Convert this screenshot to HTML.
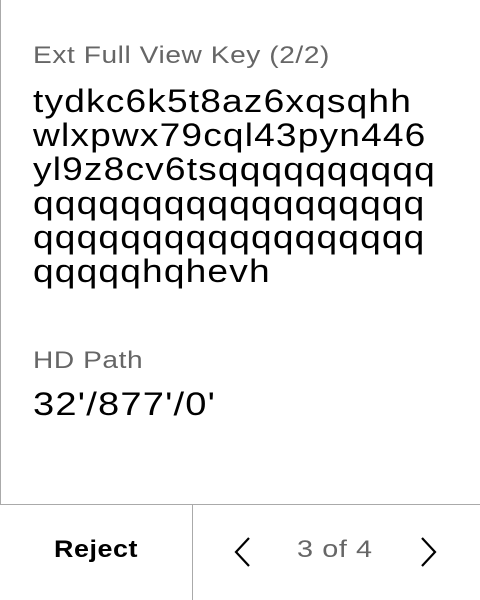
<!DOCTYPE html>
<html><head><style>
body{margin:0;width:480px;height:600px;background:#fff;position:relative;overflow:hidden;font-family:"Liberation Sans",sans-serif}
.lb{position:absolute;left:0;top:0;width:1px;height:504px;background:#aaa}
.hl{position:absolute;left:0;top:504px;width:480px;height:1px;background:#aaa}
.vl{position:absolute;left:192px;top:504px;width:1px;height:96px;background:#aaa}
.s{transform-origin:0 0;white-space:nowrap}
.lab{position:absolute;left:33px;font-size:24px;color:#666;letter-spacing:0.5px;transform:scaleX(1.17)}
.key{position:absolute;left:33px;top:84px;font-size:32px;line-height:34px;color:#000;letter-spacing:1px;transform:scaleX(1.16)}
.val{position:absolute;left:33px;top:386px;font-size:32px;color:#000;letter-spacing:1px;transform:scaleX(1.19)}
</style></head><body>
<div class="lb"></div><div class="hl"></div><div class="vl"></div>
<div class="lab s" style="top:42px">Ext Full View Key (2/2)</div>
<div class="key s">tydkc6k5t8az6xqsqhh<br>wlxpwx79cql43pyn446<br>yl9z8cv6tsqqqqqqqqqq<br>qqqqqqqqqqqqqqqqqq<br>qqqqqqqqqqqqqqqqqq<br>qqqqqhqhevh</div>
<div class="lab s" style="top:347px">HD Path</div>
<div class="val s">32'/877'/0'</div>
<div class="s" style="position:absolute;left:54px;top:536px;font-size:24px;font-weight:bold;letter-spacing:0.5px;transform:scaleX(1.12)">Reject</div>
<svg style="position:absolute;left:230px;top:535px" width="25" height="34"><path d="M19 3 L6 17 L19 31" fill="none" stroke="#000" stroke-width="2.2"/></svg>
<div class="s" style="position:absolute;left:297px;top:536px;font-size:24px;color:#666;letter-spacing:0.5px;transform:scaleX(1.2)">3 of 4</div>
<svg style="position:absolute;left:416px;top:535px" width="25" height="34"><path d="M6 3 L19 17 L6 31" fill="none" stroke="#000" stroke-width="2.2"/></svg>
</body></html>
